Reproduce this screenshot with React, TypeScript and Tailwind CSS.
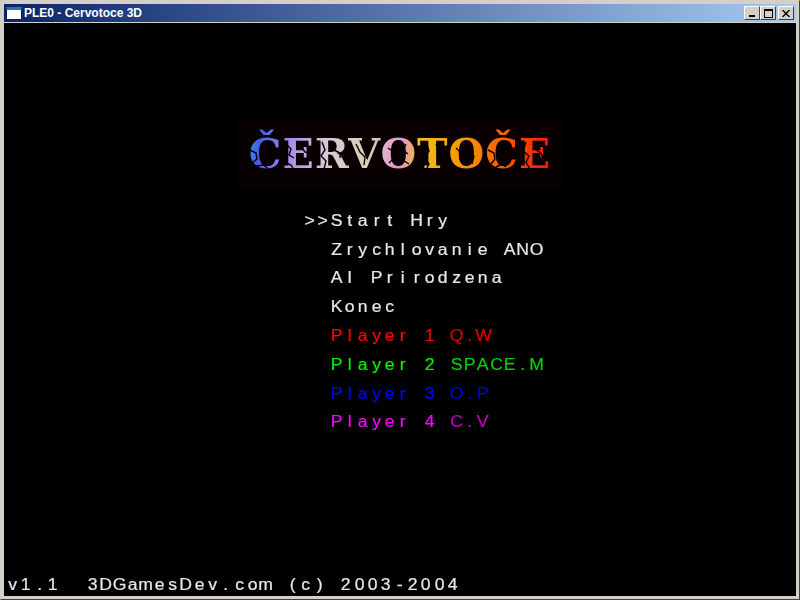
import type { ReactNode } from 'react';

// The game's bitmap font puts every character into a fixed cell
function GridText({ text, className }: { text: string; className?: string }) {
  return (
    <span className={`mt-[1px] flex font-['Liberation_Sans',Arial,sans-serif] text-[16px] leading-none [-webkit-text-stroke:0.2px_currentColor] ${className ?? ''}`}>
      {Array.from(text).map((ch, i) => (
        <span key={i} className="w-[13.33px] shrink-0 scale-x-110 text-center whitespace-pre">
          {ch}
        </span>
      ))}
    </span>
  );
}

function MenuRow({ children }: { children: ReactNode }) {
  return <div className="flex h-[28.8px] items-center">{children}</div>;
}

function PlayerRow({ label, keys, color, dim }: { label: string; keys: string; color: string; dim: string }) {
  return (
    <MenuRow>
      <GridText text={`  ${label} `} className={color} />
      <GridText text={keys} className={dim} />
    </MenuRow>
  );
}

function CaptionButton({ children }: { children: ReactNode }) {
  return (
    <div className="flex h-[14px] w-[16px] items-center justify-center border border-t-white border-l-white border-r-[#404040] border-b-[#404040] bg-[#d4d0c8]">
      {children}
    </div>
  );
}

function Logo() {
  return (
    <div className="relative flex h-[70px] w-[324px] items-center justify-center bg-[#090001]">
      <span className="bg-[linear-gradient(97deg,#38a8f0_0%,#3f5cf0_4%,#a98ce8_14%,#d8c8d8_26%,#d8d0b0_40%,#e890d8_50%,#f0c020_56%,#f89000_72%,#f85000_86%,#f81000_100%)] bg-clip-text pt-[8px] pb-[8px] font-['DejaVu_Serif',serif] text-[41px] leading-[1.1] font-bold tracking-[1px] text-transparent blur-[0.4px]">
        ČERVOTOČE
      </span>
      <svg className="absolute inset-0" width="324" height="70">
        <g stroke="#090001" strokeWidth="1.4" fill="none">
          <path d="M12 30l6 3 1 6-5 4" />
          <path d="M18 46l8-1 4 4" />
          <path d="M30 22l3 5" />
          <path d="M48 24l5 5-2 6 5 3" />
          <path d="M46 42l7 3 3 5" />
          <path d="M64 28l3 4 6 1" />
          <path d="M84 22l3 8-4 6 5 5-2 8" />
          <path d="M96 30l6 3 0 5" />
          <path d="M118 24l4 8 5 5-1 8" />
          <path d="M134 24l-3 7" />
          <path d="M150 28l6 4 0 6-5 5" />
          <path d="M160 44l6-3 5 3" />
          <path d="M168 24l-3 6 5 4" />
          <path d="M188 22l3 9-4 7 4 6-3 6" />
          <path d="M198 24l2 5" />
          <path d="M218 28l5 5-1 6 5 4" />
          <path d="M232 24l-2 7 6 5-2 8" />
          <path d="M250 30l6 3 1 6-4 5" />
          <path d="M258 47l6-3 4 3" />
          <path d="M288 22l-3 9 6 5-3 6 4 7" />
          <path d="M298 30l5 3 2 5" />
        </g>
      </svg>
    </div>
  );
}

export default function App() {
  return (
    <div className="flex h-[600px] w-[800px] flex-col overflow-hidden border border-t-[#d4d0c8] border-l-[#d4d0c8] border-r-[#404040] border-b-[#404040] bg-[#d4d0c8] p-[3px]">
      {/* Title bar */}
      <div className="flex h-[18px] shrink-0 items-center bg-[linear-gradient(90deg,#0a246a,#a6caf0)] px-[2px]">
        <div className="h-[13px] w-[16px] shrink-0 border border-[#0a246a] border-t-[3px] border-t-[#3a6ea5] bg-white" />
        <span className="ml-[2px] font-['Liberation_Sans',Arial,sans-serif] text-[12px] font-bold text-white">PLE0 - Cervotoce 3D</span>
        <div className="ml-auto flex items-center">
          <CaptionButton>
            <span className="mt-[6px] h-[2px] w-[6px] bg-black" />
          </CaptionButton>
          <CaptionButton>
            <span className="h-[9px] w-[9px] border border-t-2 border-black" />
          </CaptionButton>
          <div className="ml-[2px]">
            <CaptionButton>
              <svg width="8" height="7" viewBox="0 0 8 7">
                <path d="M0.5 0l7 7M7.5 0l-7 7" stroke="#000" strokeWidth="1.4" />
              </svg>
            </CaptionButton>
          </div>
        </div>
      </div>

      {/* Game surface */}
      <main className="mt-[1px] flex flex-1 flex-col bg-black">
        <div className="mt-[97px] flex justify-center">
          <Logo />
        </div>
        <div className="mt-[16px] ml-[299px] text-[#e8e8e8]">
          <MenuRow>
            <GridText text=">>Start Hry" />
          </MenuRow>
          <MenuRow>
            <GridText text="  Zrychlovanie ANO" />
          </MenuRow>
          <MenuRow>
            <GridText text="  AI Prirodzena" />
          </MenuRow>
          <MenuRow>
            <GridText text="  Konec" />
          </MenuRow>
          <PlayerRow label="Player 1" keys="Q.W" color="text-[#ff0000]" dim="text-[#d80000]" />
          <PlayerRow label="Player 2" keys="SPACE.M" color="text-[#00f000]" dim="text-[#00d000]" />
          <PlayerRow label="Player 3" keys="O.P" color="text-[#0000ff]" dim="text-[#0000d0]" />
          <PlayerRow label="Player 4" keys="C.V" color="text-[#ff00ff]" dim="text-[#c000c0]" />
        </div>
        <div className="mt-auto mb-[3px] ml-[2px] text-[#e8e8e8]">
          <GridText text="v1.1  3DGamesDev.com (c) 2003-2004" />
        </div>
      </main>
    </div>
  );
}
